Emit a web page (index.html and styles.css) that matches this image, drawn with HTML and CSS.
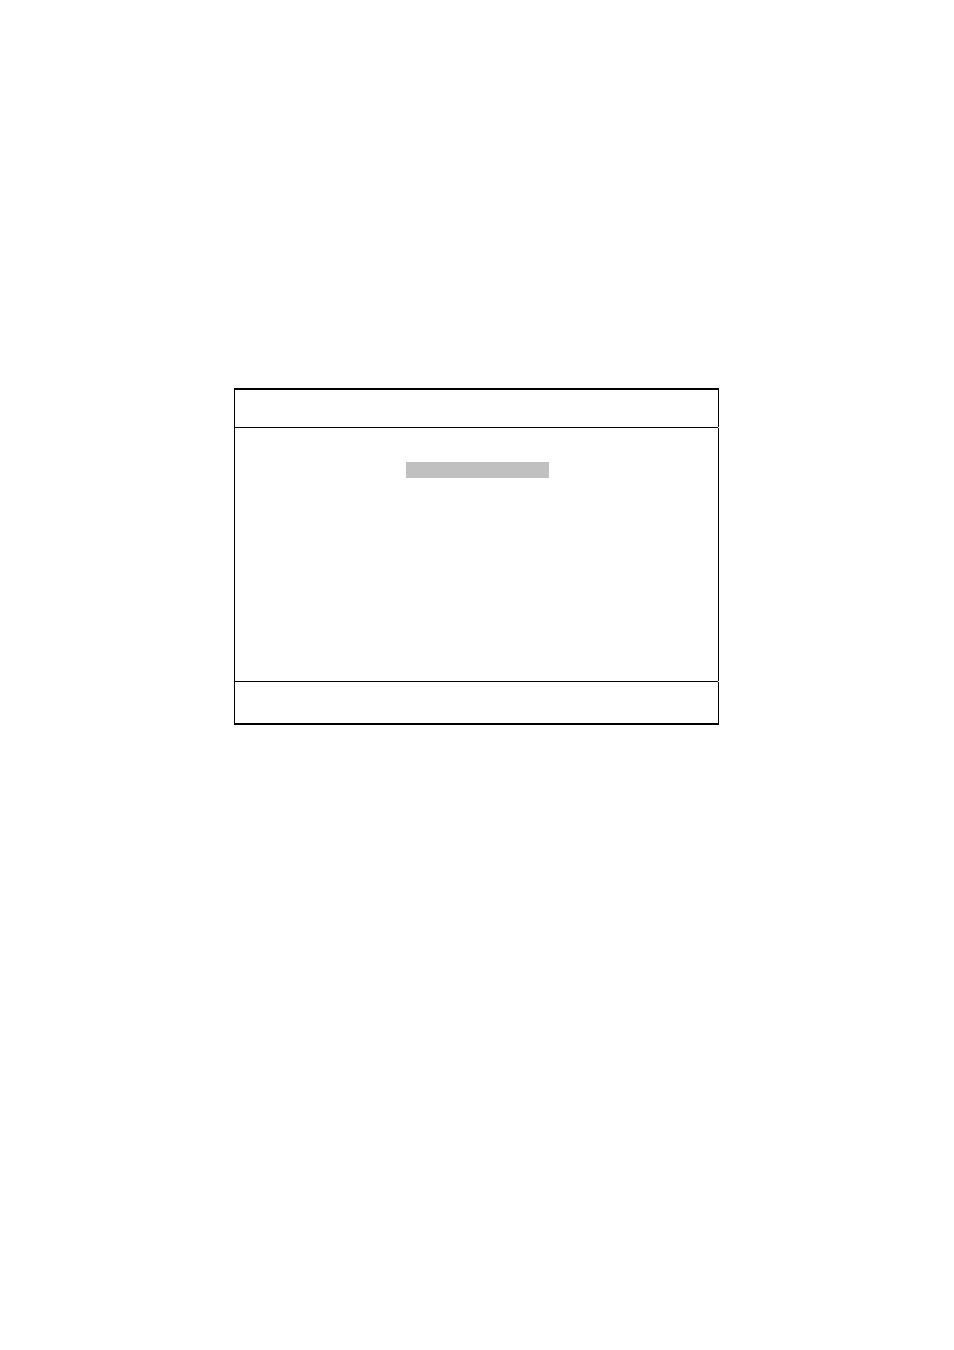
FILE: index.html
```html
<!DOCTYPE html>
<html lang="en">

<head>
    <meta charset="UTF-8">
    <meta name="viewport" content="width=device-width, initial-scale=1.0">
    <link rel="stylesheet" href="styles.css">
</head>

<body>
    <div class="screen">
        <header class="top"></header>
        <div class="divider"></div>
        <main class="content">
            <div class="highlight"></div>
        </main>
        <div class="divider"></div>
        <footer class="bottom"></footer>
    </div>
</body>

</html>
```

FILE: styles.css
```css
* {
    box-sizing: border-box;
}

body {
    background-color: white;
    margin: 0;
    padding: 388px 235px 0 234px;
}

.screen {
    display: flex;
    flex-direction: column;
    border-top: 2px solid black;
    border-bottom: 2px solid black;
}

.top,
.content,
.bottom {
    border-left: 1px solid black;
    border-right: 1px solid black;
}

.top {
    min-height: 37px;
}

.content {
    min-height: 253px;
    padding: 34px 169px 0 171px;
}

.bottom {
    min-height: 41px;
}

/* stops just short of the right border */
.divider {
    height: 1px;
    margin-right: 1px;
    background-color: black;
}

.highlight {
    height: 16px;
    background-color: silver;
}
```
